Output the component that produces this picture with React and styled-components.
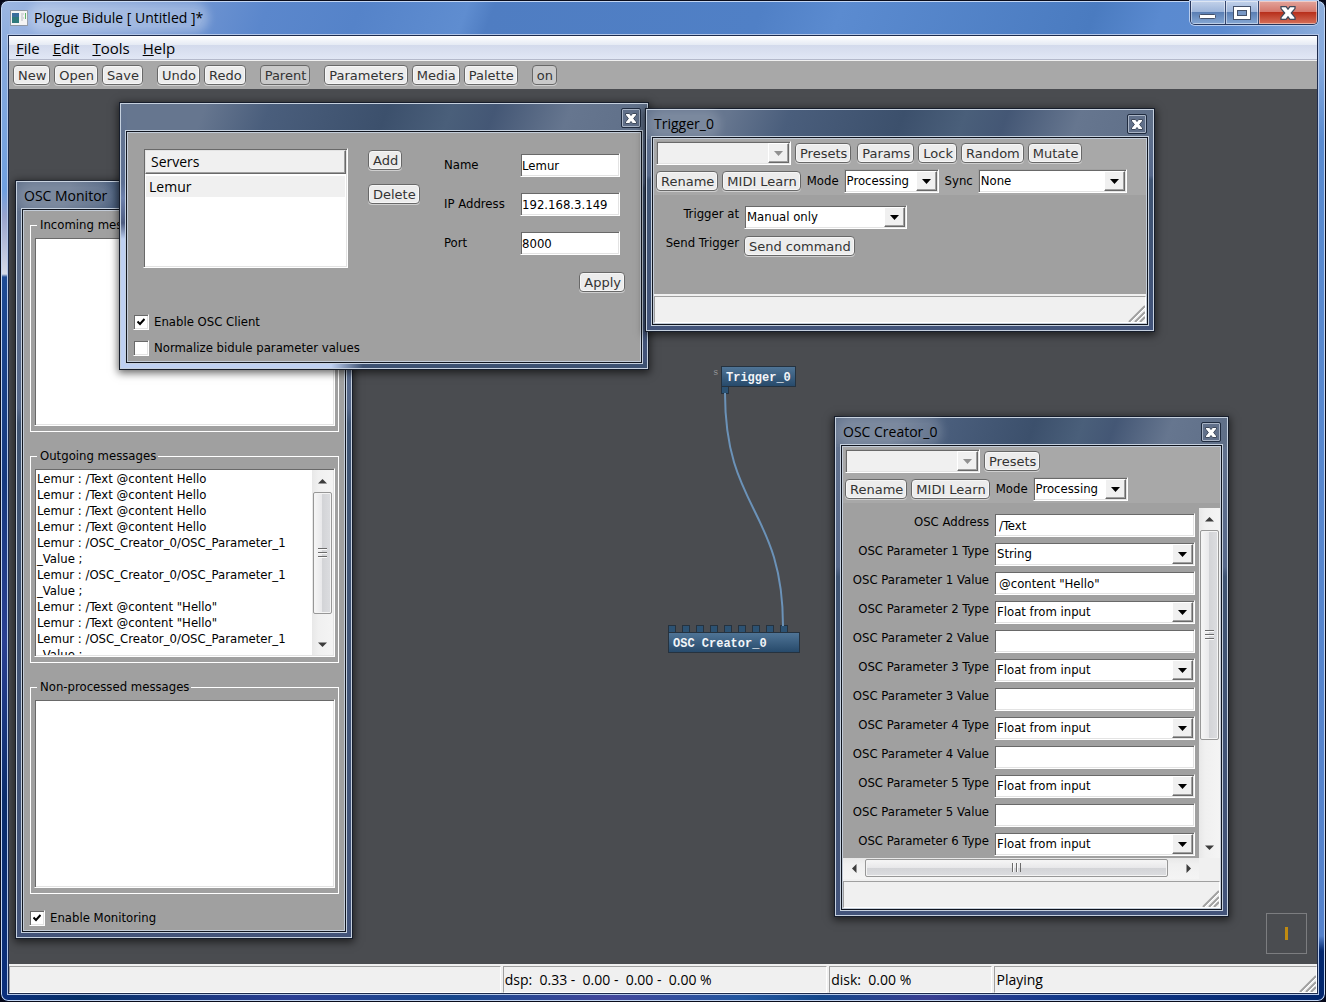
import React from "react";
import styled, { createGlobalStyle, css } from "styled-components";

const ui = '"DejaVu Sans Condensed", "DejaVu Sans", sans-serif';
const wide = '"DejaVu Sans", sans-serif';
const chrome = '"Open Sans", "Noto Sans", sans-serif';

const Global = createGlobalStyle`
  *, *::before, *::after { box-sizing: border-box; }
  body { margin: 0; background: #05081a; font: 13px/16px ${ui}; color: #000; }
  button, input, select, textarea { font: inherit; color: inherit; margin: 0; }
`;

const sunken = css`
  border: 1px solid #fff;
  border-top-color: #a0a0a0;
  border-left-color: #a0a0a0;
  box-shadow: inset 1px 1px #696969, inset -1px -1px #e3e3e3;
`;

/* ---------- application frame ---------- */

const Frame = styled.div`
  display: flex;
  flex-direction: column;
  min-height: 100vh;
  padding: 0 7px 7px;
  border: 1px solid #0a0d1c;
  border-radius: 8px;
  box-shadow: inset 0 0 0 1px #c3d6f3;
  background:
    linear-gradient(180deg, #9db7e2 0, #86a9de 60px, #6f9fe0 190px, #98a3cc 215px, #d5dae8 273px, #1d4a94 276px, #16397f 480px, #2a3f92 640px, #0a2d6c 800px, #0b2f7c 100%) left / 8px 100% no-repeat,
    linear-gradient(180deg, #8eaedb 0, #86aade 60px, #5a8bd0 140px, #5582cc 935px, #03276d 950px, #03276d 100%) right / 8px 100% no-repeat,
    linear-gradient(90deg, #0b2f7c, #063068 6%, #2c3f94 22%, #16478c 34%, #43479c 46%, #2257a0 56%, #14478a 62%, #3a3f92 70%, #12398a 80%, #03276d) bottom / 100% 8px no-repeat,
    linear-gradient(110deg, #9db7e2 0, #7f9fd6 10%, #5b87cc 20%, #5583c9 27%, #5f8dd0 35%, #4f7dc2 37%, #5080c6 57%, #5b8bd0 63%, #4a7bc0 82%, #5a8ad0 87%, #5c8bd0 92%, #8eaedb 100%) top / 100% 40px no-repeat,
    #16397f;
`;

const TitleBar = styled.header`
  display: flex;
  align-items: center;
  height: 34px;
  padding: 0 0 0 2px;
`;

const AppTitle = styled.h1`
  flex: 1;
  margin: 0 0 0 6px;
  font: 14px/20px ${chrome};
  span {
    border-radius: 10px;
    background: rgba(255, 255, 255, 0.28);
    box-shadow: 0 0 8px 6px rgba(255, 255, 255, 0.28);
  }
`;

const Captions = styled.div`
  display: flex;
  align-self: flex-start;
  height: 24px;
  border: 1px solid #26365c;
  border-top: 0;
  border-radius: 0 0 5px 5px;
  box-shadow: 0 0 0 1px #b8cdee;
  overflow: hidden;
`;

const captionTone = {
  blue: "linear-gradient(#c3d2ea 0, #9cb4d9 48%, #5b7fb4 50%, #86a8d4 100%)",
  red: "linear-gradient(#e3a59c 0, #d4766a 48%, #b8301c 50%, #d5705a 100%)",
};

const Caption = styled.button`
  display: grid;
  place-items: center;
  width: ${(p) => p.$w}px;
  padding: 0;
  border: 0;
  border-left: 1px solid #34466e;
  background: ${(p) => captionTone[p.$tone || "blue"]};
  box-shadow: inset 0 0 0 1px rgba(255, 255, 255, 0.45);
  &:first-child { border-left: 0; }
`;

const Client = styled.main`
  flex: 1;
  display: flex;
  flex-direction: column;
  border: 1px solid #1d2b4c;
  box-shadow: 0 0 0 1px #b4c7e8;
`;

const MenuBar = styled.nav`
  display: flex;
  gap: 13px;
  height: 25px;
  padding: 0 7px;
  border-bottom: 1px solid #f0f0f0;
  background: linear-gradient(#fff 0, #e5eaf4 9px, #d3daec 9px, #e1e7f5 23px, #b4b9cb 23px);
`;

const MenuItem = styled.button`
  padding: 0;
  border: 0;
  background: none;
  font: 15px/20px ${chrome};
`;

const ToolBar = styled.div`
  display: flex;
  gap: 14px;
  height: 28px;
  padding: 4px;
  background: #a8a8a8;
`;

const Group = styled.div`
  display: flex;
  align-items: center;
  gap: 4px;
`;

const Btn = styled.button`
  height: 20px;
  padding: 2px 3px 0 4px;
  border: 1px solid #686868;
  border-radius: 4px;
  background: ${(p) => (p.$on ? "#c9c9c9" : "#ececec")};
  box-shadow: 0 1px #cfcfcf${(p) => (p.$on ? "" : ", inset 0 0 0 1px #f6f6f6")};
  color: #333;
  font: 13px/16px ${wide};
  white-space: nowrap;
`;

const Workspace = styled.section`
  position: relative;
  flex: 1;
  min-height: 860px;
  background: #4a4c50;
  overflow: hidden;
`;

/* ---------- status bars ---------- */

const StatusBar = styled.footer`
  display: flex;
  gap: 2px;
  height: 29px;
  padding-top: 2px;
  background: #f0f0f0;
`;

const Pane = styled.div`
  flex: ${(p) => p.$grow || 1} 1 0;
  display: flex;
  align-items: flex-end;
  justify-content: space-between;
  min-width: 0;
  padding-left: 1px;
  border: 1px solid #fff;
  border-top-color: #a0a0a0;
  border-left-color: #a0a0a0;
  font: 14px/24px ${chrome};
  white-space: pre;
`;

/* ---------- floating windows ---------- */

const paints = {
  gloss: "linear-gradient(110deg, #66768f 0, #66768f 16%, #4a5e7c 28%, #3c506c 50%, #4a5f7a 62%, #445775 70%, #66768f 84%, #5f6f88 100%)",
};

const Win = styled.section`
  position: absolute;
  left: ${(p) => p.$x}px;
  top: ${(p) => p.$y}px;
  display: flex;
  flex-direction: column;
  width: ${(p) => p.$w}px;
  height: ${(p) => p.$h}px;
  padding: 0 6px 6px;
  border: 1px solid #161d2b;
  background:
    ${(p) => (p.$bright ? "linear-gradient(#66768f 0, #5c6f93 80px, #6c80ac 95px, #4e5c80 120px, #bed0f2 136px, #bed0f2 100%) left / 7px 100% no-repeat, linear-gradient(90deg, #bed0f2 40%, #3e5272 46%) bottom / 100% 7px no-repeat," : "")}
    ${paints.gloss} top / 100% 30px no-repeat,
    linear-gradient(#64748e 0, #56688a 30%, #3f5472 32%, #43547a 100%);
  box-shadow: inset 0 0 0 1px #c5d0de, 0 2px 8px 1px rgba(0, 0, 0, 0.6);
`;

const WinTitle = styled.header`
  display: flex;
  align-items: center;
  justify-content: space-between;
  height: 28px;
  padding: 2px 1px 0 2px;
`;

const WinName = styled.h2`
  margin: 0;
  border-radius: 8px;
  background: rgba(255, 255, 255, 0.14);
  box-shadow: 0 0 8px 6px rgba(255, 255, 255, 0.14);
  clip-path: inset(-7px -14px -3px -7px);
  font: 14px/18px ${chrome};
`;

const CloseBtn = styled.button`
  display: grid;
  place-items: center;
  width: 20px;
  height: 20px;
  margin-left: auto;
  padding: 0;
  border: 1px solid #1f2b3f;
  border-radius: 2px;
  background: rgba(96, 112, 138, 0.6);
  box-shadow: inset 0 0 0 1px #a9b4c5;
`;

const WinBody = styled.div`
  flex: 1;
  display: flex;
  flex-direction: column;
  min-height: 0;
  padding: 1px;
  border: 1px solid #10151f;
  background: #c3ccd8;
  box-shadow: 0 0 0 1px #c5d0de;
`;

const Panel = styled.div`
  flex: 1;
  display: flex;
  flex-direction: column;
  min-height: 0;
  padding: ${(p) => p.$pad || "0"};
  background: #a0a0a0;
`;

/* ---------- form controls ---------- */

const PickWrap = styled.div`
  display: grid;
  width: ${(p) => (p.$w ? p.$w + "px" : "100%")};
  height: 24px;
  background: ${(p) => (p.$off ? "#f0f0f0" : "#fff")};
  ${sunken}
  > * { grid-area: 1 / 1; }
`;

const PickSelect = styled.select`
  appearance: none;
  width: 100%;
  height: 22px;
  padding: 0 22px 0 2px;
  border: 0;
  border-radius: 0;
  background: transparent;
  outline: 0;
`;

const PickArrow = styled.span`
  display: grid;
  place-items: center;
  justify-self: end;
  width: 21px;
  height: 20px;
  margin: 1px 1px 0 0;
  border: 1px solid #696969;
  border-top-color: #fff;
  border-left-color: #fff;
  background: #f0f0f0;
  box-shadow: inset -1px -1px #a0a0a0;
  pointer-events: none;
`;

const Field = styled.input`
  width: 100%;
  height: 24px;
  padding: 0 ${(p) => p.$indent || 1}px;
  border-radius: 0;
  background: #fff;
  outline: 0;
  ${sunken}
`;

const Check = styled.label`
  display: flex;
  align-items: center;
  gap: 5px;
  height: 16px;
`;

const CheckBox = styled.span`
  display: grid;
  width: 16px;
  height: 16px;
  background: #fff;
  ${sunken}
  > * { grid-area: 1 / 1; place-self: center; }
  input { appearance: none; width: 14px; height: 14px; }
  svg { visibility: hidden; pointer-events: none; }
  input:checked + svg { visibility: visible; }
`;

/* ---------- scroll bars ---------- */

const Track = styled.div`
  display: flex;
  flex-direction: ${(p) => (p.$row ? "row" : "column")};
  flex: ${(p) => (p.$row ? "1 1 0" : "none")};
  ${(p) => (p.$row ? "height: 21px; padding: 1px 0 2px;" : "width: 21px; padding: 0 1px;")}
  background: linear-gradient(${(p) => (p.$row ? "180deg" : "90deg")}, #e8e8e8, #f0f0f0 30%, #f4f4f4);
`;

const Arrow = styled.span`
  flex: 0 0 22px;
  display: grid;
  place-items: center;
`;

const Thumb = styled.div`
  flex: ${(p) => p.$size} 1 0;
  display: grid;
  place-items: center;
  border: 1px solid #979797;
  border-radius: 2px;
  background: linear-gradient(${(p) => (p.$row ? "180deg" : "90deg")}, #f6f6f6 0, #e8e8ea 48%, #d3d4d7 50%, #dcdde0 100%);
  box-shadow: inset 0 0 0 1px #f4f4f4;
`;

const Rest = styled.div`
  flex: ${(p) => p.$size} 1 0;
`;

/* ---------- monitor window ---------- */

const Box = styled.fieldset`
  min-width: 0;
  margin: 0 0 16px 1px;
  padding: 4px 3px 5px;
  border: 1px solid #fff;
`;

const Legend = styled.legend`
  margin-left: 3px;
  padding: 0 2px 0 3px;
  line-height: 16px;
`;

const LogWrap = styled.div`
  display: flex;
  height: 189px;
  padding: 1px;
  background: #fff;
  ${sunken}
`;

const Log = styled.textarea`
  flex: 1;
  min-width: 0;
  padding: 1px 0 0 1px;
  border: 0;
  background: none;
  outline: 0;
  resize: none;
  overflow: hidden;
  white-space: pre;
`;

/* ---------- client window ---------- */

const Columns = styled.div`
  display: flex;
  align-items: flex-start;
  margin-bottom: 22px;
  padding: 0 0 0 10px;
`;

const ListBox = styled.div`
  width: 205px;
  height: 120px;
  margin-right: 20px;
  padding: 1px;
  background: #fff;
  ${sunken}
`;

const ServerTable = styled.table`
  width: 100%;
  border-spacing: 0;
  font: 14px/20px ${chrome};
  th {
    height: 24px;
    padding: 0 5px;
    border: 1px solid #696969;
    border-top-color: #e3e3e3;
    border-left-color: #e3e3e3;
    background: #f0f0f0;
    box-shadow: inset -1px -1px #a0a0a0;
    font-weight: 400;
    text-align: left;
  }
  td {
    height: 24px;
    padding: 0 3px;
    border: 1px solid #fff;
    border-top-width: 2px;
    background: #f0f0f0;
    background-clip: padding-box;
  }
`;

const Stack = styled.div`
  display: flex;
  flex-direction: column;
  align-items: flex-start;
  gap: 14px;
  width: 76px;
  padding-top: 2px;
`;

const Fields = styled.form`
  display: grid;
  grid-template-columns: 76px 100px 5px;
  row-gap: 15px;
  align-items: center;
  padding-top: 5px;
`;

const ApplyCell = styled.div`
  display: flex;
  justify-content: flex-end;
  grid-column: 1 / -1;
  padding-top: 2px;
`;

const Checks = styled.div`
  display: flex;
  flex-direction: column;
  gap: 10px;
`;

/* ---------- parameter windows ---------- */

const ParamBar = styled.div`
  display: flex;
  flex-direction: column;
  gap: 4px;
  height: 56px;
  padding: 2px;
  background: #a8a8a8;
`;

const ParamRow = styled.div`
  display: flex;
  gap: 6px;
  height: 24px;
`;

const Tag = styled.label`
  margin-right: 1px;
`;

const ParamGrid = styled.div`
  flex: 1;
  display: grid;
  grid-template-columns: ${(p) => p.$label}px ${(p) => (p.$control ? p.$control + "px" : "1fr")};
  grid-auto-rows: 24px;
  gap: 5px;
  align-content: start;
  justify-items: start;
  min-width: 0;
  padding: ${(p) => p.$pad};
  > label { justify-self: end; line-height: 18px; white-space: nowrap; }
  > button { margin-top: 2px; }
`;

const ScrollArea = styled.div`
  flex: 1;
  display: flex;
  min-height: 0;
  margin-top: 5px;
  overflow: hidden;
`;

const ScrollFoot = styled.div`
  display: flex;
  padding-right: 21px;
  background: #f0f0f0;
`;

/* ---------- patch nodes ---------- */

const Node = styled.div`
  position: absolute;
  left: ${(p) => p.$x}px;
  top: ${(p) => p.$y}px;
  width: ${(p) => p.$w}px;
  height: 21px;
  padding: 1px 0 0 4px;
  border: 1px solid #25323f;
  background: linear-gradient(#4f7496, #274a6b);
  color: #f2f5f8;
  font: bold 12px/20px "Liberation Mono", monospace;
`;

const Ports = styled.div`
  position: absolute;
  left: ${(p) => p.$x}px;
  top: ${(p) => p.$y}px;
  display: flex;
  gap: 6px;
`;

const Port = styled.i`
  width: 8px;
  height: 8px;
  border: 1px solid #25323f;
  background: #2c5273;
`;

const Solo = styled.span`
  position: absolute;
  left: 704px;
  top: 279px;
  color: #96979a;
  font: 9px/10px "Liberation Mono", monospace;
`;

const Cable = styled.svg`
  position: absolute;
  left: 709px;
  top: 303px;
`;

const Meter = styled.div`
  position: absolute;
  right: 10px;
  bottom: 10px;
  display: grid;
  place-items: center;
  width: 41px;
  height: 41px;
  border: 1px solid #7c7d80;
  &::after { content: ""; width: 3px; height: 13px; background: #c08a10; }
`;

/* ---------- small drawings ---------- */

const AppIcon = () => (
  <svg width="18" height="16" viewBox="0 0 18 16" aria-hidden="true">
    <rect x="0.5" y="0.5" width="17" height="15" fill="#f4f4f4" stroke="#8d96a3" />
    <rect x="2" y="3" width="7" height="10" fill="#2f7a7c" />
    <rect x="2" y="3" width="7" height="4" fill="#3b6f9c" />
    <path d="M11 4h3M11 6h2M11 8h3M11 10h2" stroke="#b9bdc2" />
    <rect x="15" y="3" width="1" height="6" fill="#57b060" />
  </svg>
);

const Cross = ({ w = 12, h = 11 }) => (
  <svg width={w} height={h} viewBox="0 0 12 11" aria-hidden="true">
    <path d="M.5 .5H4.500L6 2.500 7.500 .5H11.500V2L8.600 5.500 11.500 9V10.500H7.500L6 8.500 4.500 10.500H.5V9L3.400 5.500 .5 2z" fill="#fff" stroke="#3f4a5c" strokeWidth="1" />
  </svg>
);

const Tri = ({ dir, size = 9, color = "#3c3c3c" }) => {
  const turn = { up: 180, down: 0, left: 90, right: -90 }[dir];
  return (
    <svg width={size} height={size} viewBox="0 0 9 9" aria-hidden="true">
      <path d="M0 2.500h9L4.500 7z" fill={color} transform={`rotate(${turn} 4.500 4.500)`} />
    </svg>
  );
};

const Grip = ({ row }) => (
  <svg width="9" height="10" viewBox="0 0 9 10" aria-hidden="true">
    <g transform={row ? "rotate(-90 4.500 4.500)" : undefined}>
      <path d="M0 .5h9M0 4.500h9M0 8.500h9" stroke="#6b6b6b" />
      <path d="M0 1.500h9M0 5.500h9M0 9.500h9" stroke="#fafafa" />
    </g>
  </svg>
);

const SizeGrip = () => (
  <svg width="17" height="17" viewBox="0 0 17 17" aria-hidden="true">
    <path d="M1 17L17 1M7 17L17 7M12 17l5-5" stroke="#a0a0a0" strokeWidth="2" />
    <path d="M3 17L17 3M9 17l8-8" stroke="#fff" />
  </svg>
);

/* ---------- composed parts ---------- */

function Pick({ id, label, value = "", width, off }) {
  return (
    <PickWrap $w={width} $off={off}>
      <PickSelect id={id} aria-label={label} disabled={off} defaultValue={value}>
        <option>{value}</option>
      </PickSelect>
      <PickArrow>
        <svg width="9" height="5" viewBox="0 0 9 5" aria-hidden="true">
          <path d="M0 0h9L4.500 5z" fill={off ? "#909090" : "#000"} />
        </svg>
      </PickArrow>
    </PickWrap>
  );
}

function Tick({ checked, children }) {
  return (
    <Check>
      <CheckBox>
        <input type="checkbox" defaultChecked={checked} />
        <svg width="8" height="8" viewBox="0 0 8 8" aria-hidden="true">
          <path d="M.5 3.500L3 6 7.500 1" fill="none" stroke="#000" strokeWidth="2" />
        </svg>
      </CheckBox>
      {children}
    </Check>
  );
}

function Scroller({ row, size, rest }) {
  return (
    <Track $row={row} aria-hidden="true">
      <Arrow><Tri dir={row ? "left" : "up"} /></Arrow>
      <Thumb $size={size} $row={row}><Grip row={row} /></Thumb>
      <Rest $size={rest} />
      <Arrow><Tri dir={row ? "right" : "down"} /></Arrow>
    </Track>
  );
}

function FloatingWindow({ title, closable, children, ...place }) {
  return (
    <Win {...place}>
      <WinTitle>
        {title && <WinName>{title}</WinName>}
        {closable && <CloseBtn aria-label="Close"><Cross w={12} h={11} /></CloseBtn>}
      </WinTitle>
      <WinBody>{children}</WinBody>
    </Win>
  );
}

function MessageBox({ title, text = "", scroll }) {
  return (
    <Box>
      <Legend>{title}</Legend>
      <LogWrap>
        <Log readOnly aria-label={title} defaultValue={text} />
        {scroll && <Scroller size={125} rest={20} />}
      </LogWrap>
    </Box>
  );
}

const outgoing = [
  "Lemur : /Text @content Hello",
  "Lemur : /Text @content Hello",
  "Lemur : /Text @content Hello",
  "Lemur : /Text @content Hello",
  "Lemur : /OSC_Creator_0/OSC_Parameter_1",
  "_Value ;",
  "Lemur : /OSC_Creator_0/OSC_Parameter_1",
  "_Value ;",
  'Lemur : /Text @content "Hello"',
  'Lemur : /Text @content "Hello"',
  "Lemur : /OSC_Creator_0/OSC_Parameter_1",
  "_Value ;",
].join("\n");

const servers = [["Name", "Lemur"], ["IP Address", "192.168.3.149"], ["Port", "8000"]];

const params = [
  ["OSC Address", "text", "/Text"],
  ["OSC Parameter 1 Type", "pick", "String"],
  ["OSC Parameter 1 Value", "text", '@content "Hello"'],
  ["OSC Parameter 2 Type", "pick", "Float from input"],
  ["OSC Parameter 2 Value", "text", ""],
  ["OSC Parameter 3 Type", "pick", "Float from input"],
  ["OSC Parameter 3 Value", "text", ""],
  ["OSC Parameter 4 Type", "pick", "Float from input"],
  ["OSC Parameter 4 Value", "text", ""],
  ["OSC Parameter 5 Type", "pick", "Float from input"],
  ["OSC Parameter 5 Value", "text", ""],
  ["OSC Parameter 6 Type", "pick", "Float from input"],
];

const tools = [
  ["New", "Open", "Save"],
  ["Undo", "Redo"],
  ["Parent"],
  ["Parameters", "Media", "Palette"],
  ["on"],
];

export default function App() {
  return (
    <>
      <Global />
      <Frame>
        <TitleBar>
          <AppIcon />
          <AppTitle><span>Plogue Bidule [ Untitled ]*</span></AppTitle>
          <Captions>
            <Caption $w={34} aria-label="Minimize">
              <svg width="18" height="14" viewBox="0 0 18 14" aria-hidden="true">
                <rect x="0.5" y="8.500" width="16" height="4" rx="1" fill="#fff" stroke="#44516a" />
              </svg>
            </Caption>
            <Caption $w={33} aria-label="Maximize">
              <svg width="18" height="14" viewBox="0 0 18 14" aria-hidden="true">
                <rect x="0.5" y="0.5" width="17" height="13" fill="#fff" stroke="#44516a" />
                <rect x="4.500" y="4.500" width="9" height="5" fill="#7898c6" stroke="#44516a" />
              </svg>
            </Caption>
            <Caption $w={59} $tone="red" aria-label="Close"><Cross w={16} h={14} /></Caption>
          </Captions>
        </TitleBar>
        <Client>
          <MenuBar>
            {["File", "Edit", "Tools", "Help"].map((m) => (
              <MenuItem key={m}><u>{m[0]}</u>{m.slice(1)}</MenuItem>
            ))}
          </MenuBar>
          <ToolBar>
            {tools.map((g) => (
              <Group key={g[0]}>
                {g.map((t) => <Btn key={t} $on={t === "Parent" || t === "on"}>{t}</Btn>)}
              </Group>
            ))}
          </ToolBar>

          <Workspace>
            <Solo>s</Solo>
            <Ports $x={712} $y={297}><Port /></Ports>
            <Node $x={712} $y={277} $w={75}>Trigger_0</Node>
            <Ports $x={659} $y={536}>{Array.from({ length: 9 }, (_, i) => <Port key={i} />)}</Ports>
            <Node $x={659} $y={543} $w={132}>OSC Creator_0</Node>
            <Cable width="72" height="235" viewBox="0 0 72 235" aria-hidden="true">
              <path d="M7 1C7 118 65 118 65 234" fill="none" stroke="#6b92b8" strokeWidth="2" />
            </Cable>

            <FloatingWindow title="OSC Monitor" $x={6} $y={91} $w={338} $h={759}>
              <Panel $pad="6px 5px 0">
                <MessageBox title="Incoming messages" />
                <MessageBox title="Outgoing messages" text={outgoing} scroll />
                <MessageBox title="Non-processed messages" />
                <Tick checked>Enable Monitoring</Tick>
              </Panel>
            </FloatingWindow>

            <FloatingWindow closable $bright $x={110} $y={13} $w={530} $h={268}>
              <Panel $pad="15px 5px 4px">
                <Columns>
                  <ListBox>
                    <ServerTable>
                      <thead><tr><th scope="col">Servers</th></tr></thead>
                      <tbody><tr><td>Lemur</td></tr></tbody>
                    </ServerTable>
                  </ListBox>
                  <Stack><Btn>Add</Btn><Btn>Delete</Btn></Stack>
                  <Fields>
                    {servers.map(([name, value]) => (
                      <React.Fragment key={name}>
                        <label htmlFor={`srv-${name}`}>{name}</label>
                        <Field id={`srv-${name}`} defaultValue={value} />
                        <span />
                      </React.Fragment>
                    ))}
                    <ApplyCell><Btn type="button">Apply</Btn></ApplyCell>
                  </Fields>
                </Columns>
                <Checks>
                  <Tick checked>Enable OSC Client</Tick>
                  <Tick>Normalize bidule parameter values</Tick>
                </Checks>
              </Panel>
            </FloatingWindow>

            <FloatingWindow title="Trigger_0" closable $x={636} $y={19} $w={510} $h={224}>
              <Panel>
                <ParamBar>
                  <ParamRow>
                    <Group>
                      <Pick label="Preset" width={135} off />
                      <Btn>Presets</Btn>
                    </Group>
                    <Group><Btn>Params</Btn><Btn>Lock</Btn><Btn>Random</Btn><Btn>Mutate</Btn></Group>
                  </ParamRow>
                  <ParamRow>
                    <Group><Btn>Rename</Btn><Btn>MIDI Learn</Btn></Group>
                    <Group>
                      <Tag htmlFor="trigger-mode">Mode</Tag>
                      <Pick id="trigger-mode" value="Processing" width={95} />
                    </Group>
                    <Group>
                      <Tag htmlFor="trigger-sync">Sync</Tag>
                      <Pick id="trigger-sync" value="None" width={149} />
                    </Group>
                  </ParamRow>
                </ParamBar>
                <ParamGrid $label={85} $control={163} $pad="10px 0 0">
                  <label htmlFor="trigger-at">Trigger at</label>
                  <Pick id="trigger-at" value="Manual only" />
                  <label htmlFor="trigger-send">Send Trigger</label>
                  <Btn id="trigger-send">Send command</Btn>
                </ParamGrid>
                <StatusBar><Pane><span /><SizeGrip /></Pane></StatusBar>
              </Panel>
            </FloatingWindow>

            <FloatingWindow title="OSC Creator_0" closable $x={825} $y={327} $w={395} $h={501}>
              <Panel>
                <ParamBar>
                  <ParamRow>
                    <Group>
                      <Pick label="Preset" width={135} off />
                      <Btn>Presets</Btn>
                    </Group>
                  </ParamRow>
                  <ParamRow>
                    <Group><Btn>Rename</Btn><Btn>MIDI Learn</Btn></Group>
                    <Group>
                      <Tag htmlFor="creator-mode">Mode</Tag>
                      <Pick id="creator-mode" value="Processing" width={95} />
                    </Group>
                  </ParamRow>
                </ParamBar>
                <ScrollArea>
                  <ParamGrid $label={146} $pad="5px 4px 0 0">
                    {params.map(([name, kind, value]) => (
                      <React.Fragment key={name}>
                        <label htmlFor={name}>{name}</label>
                        {kind === "pick"
                          ? <Pick id={name} value={value} />
                          : <Field id={name} $indent={4} defaultValue={value} />}
                      </React.Fragment>
                    ))}
                  </ParamGrid>
                  <Scroller size={209} rest={97} />
                </ScrollArea>
                <ScrollFoot><Scroller row size={303} rest={9} /></ScrollFoot>
                <StatusBar><Pane><span /><SizeGrip /></Pane></StatusBar>
              </Panel>
            </FloatingWindow>

            <Meter />
          </Workspace>

          <StatusBar>
            <Pane $grow={494} />
            <Pane $grow={325}>dsp:  0.33 -  0.00 -  0.00 -  0.00 %</Pane>
            <Pane $grow={162}>disk:  0.00 %</Pane>
            <Pane $grow={323}>Playing<SizeGrip /></Pane>
          </StatusBar>
        </Client>
      </Frame>
    </>
  );
}
